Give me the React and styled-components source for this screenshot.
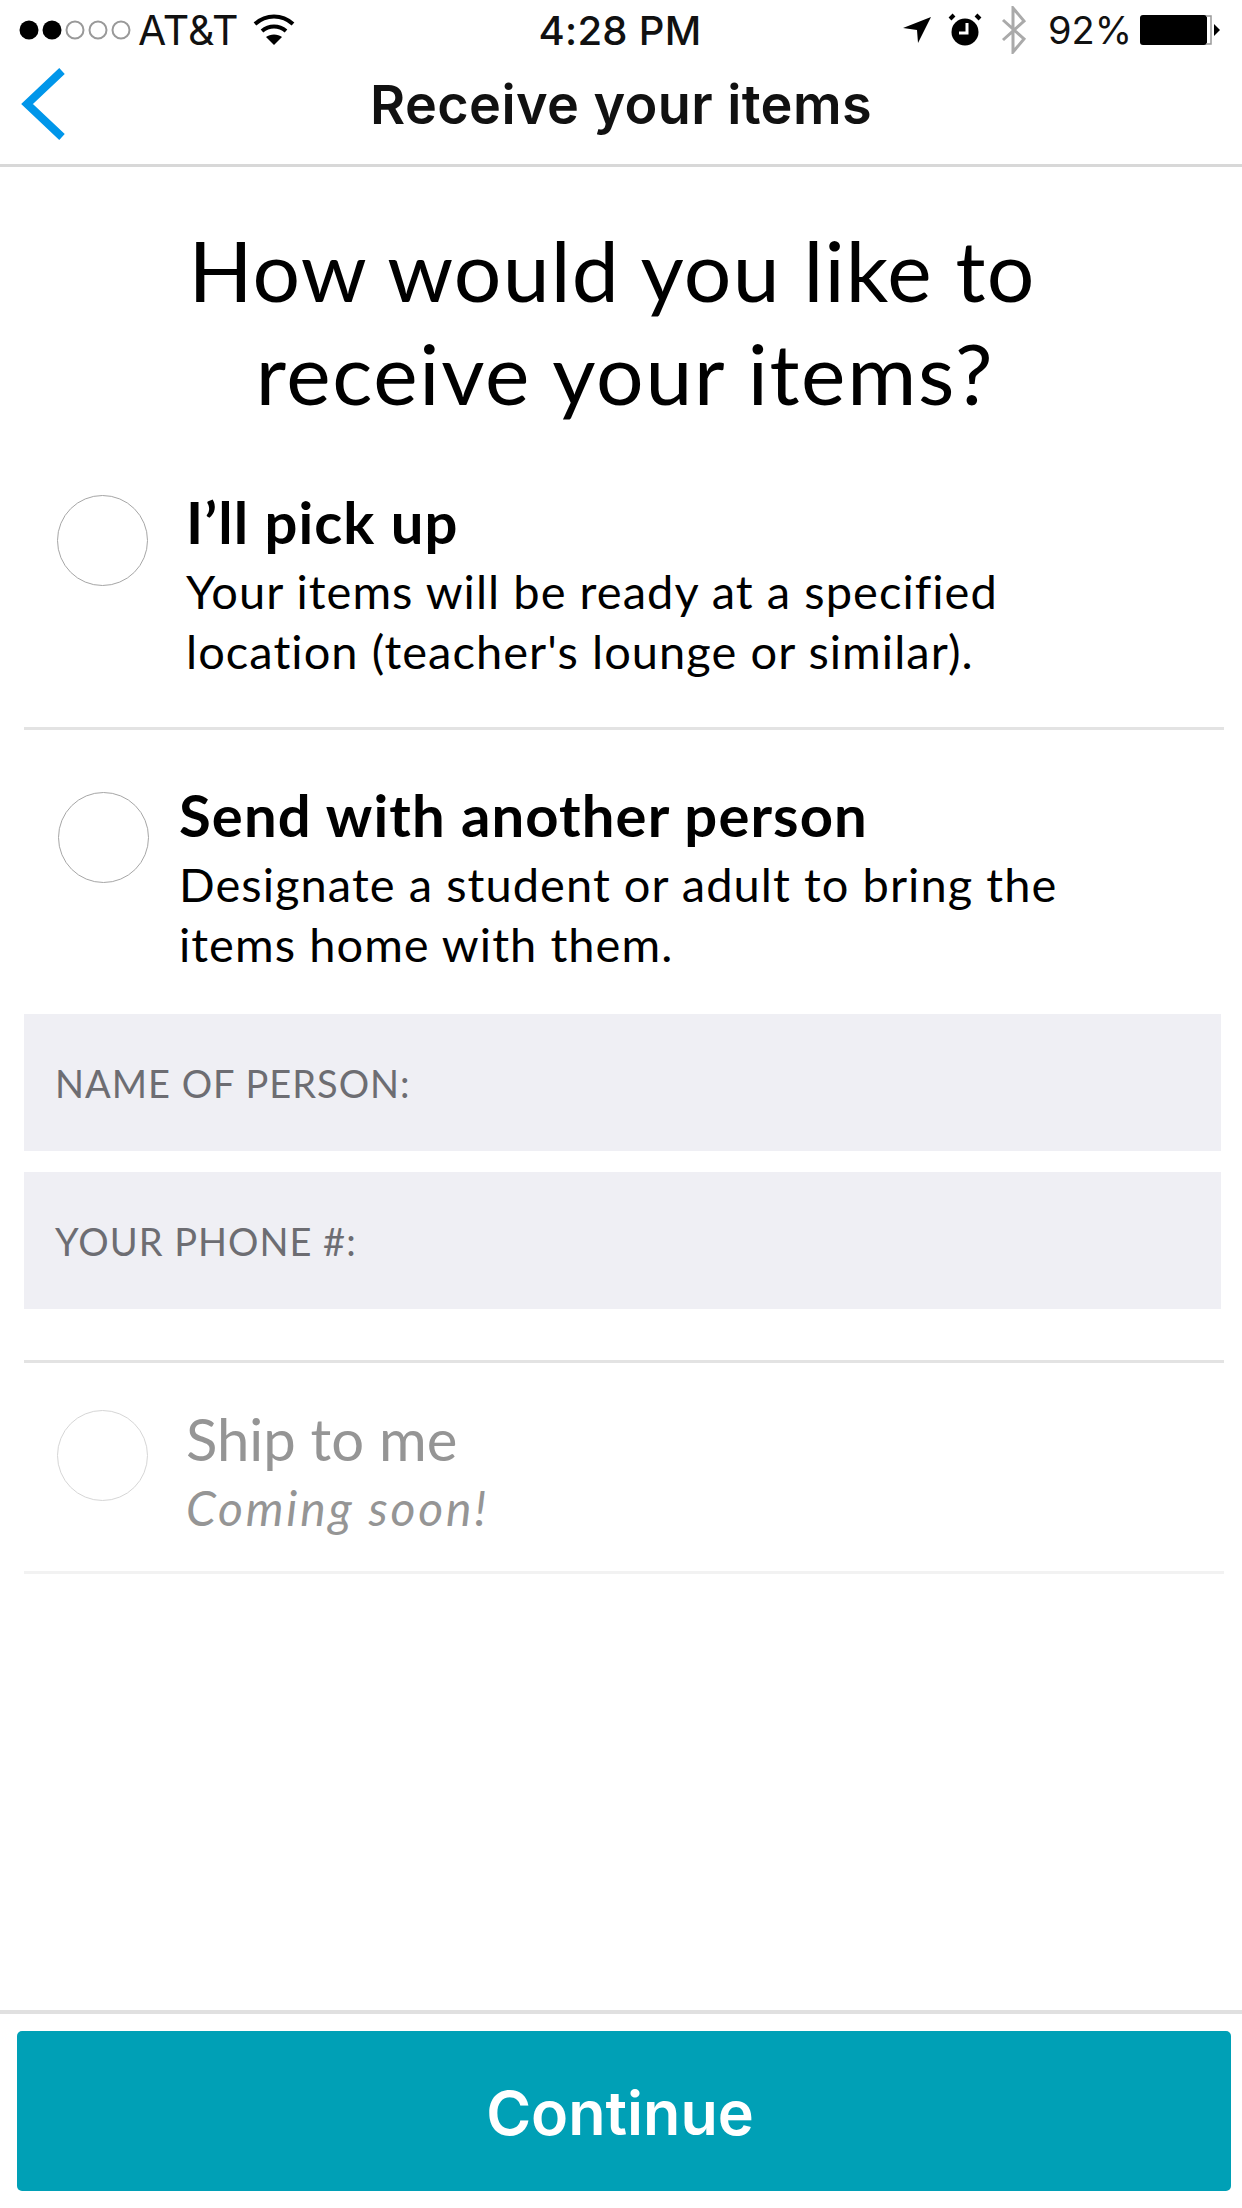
import React from "react";
import styled, { createGlobalStyle } from "styled-components";

const GlobalStyle = createGlobalStyle`
  html, body {
    margin: 0;
    padding: 0;
    background: #fff;
  }
  * {
    box-sizing: border-box;
  }
`;

const Page = styled.div`
  width: 1242px;
  height: 2208px;
  display: flex;
  flex-direction: column;
  background: #fff;
  font-family: "Lato", "Liberation Sans", sans-serif;
  color: #000;
`;

const StatusBar = styled.div`
  height: 60px;
  display: grid;
  grid-template-columns: 1fr auto 1fr;
  align-items: center;
  padding: 0 20px 0 18px;
  font-family: "Inter", "Liberation Sans", sans-serif;
  font-size: 41px;
  color: #111;
`;

const StatusLeft = styled.div`
  display: flex;
  align-items: center;
`;

const StatusRight = styled.div`
  display: flex;
  align-items: center;
  justify-content: flex-end;
`;

const Carrier = styled.span`
  margin: 0 15px 0 4px;
`;

const Clock = styled.div`
  font-size: 40px;
  font-weight: 500;
  letter-spacing: 0.3px;
`;

const Percent = styled.span`
  margin: 0 8px 0 20px;
  font-size: 38px;
`;

const NavBar = styled.div`
  height: 107px;
  display: flex;
  align-items: center;
  justify-content: center;
  position: relative;
  border-bottom: 3px solid #d8d8d8;
  padding-bottom: 16px;
`;

const BackIcon = styled.svg`
  position: absolute;
  left: 20px;
  top: 7px;
`;

const NavTitle = styled.div`
  font-family: "Inter", "Liberation Sans", sans-serif;
  font-weight: 600;
  font-size: 54px;
  letter-spacing: 0.4px;
  color: #111;
`;

const Heading = styled.h1`
  margin: 51px 0 0;
  font-size: 84px;
  line-height: 103px;
  font-weight: 400;
  text-align: center;
`;

const HeadingLine = styled.span`
  display: block;
  padding: 0 ${(p) => p.$right}px 0 ${(p) => p.$left}px;
  letter-spacing: ${(p) => p.$spacing}px;
`;

const Option = styled.div`
  margin: 0 18px 0 24px;
  padding: ${(p) => p.$top}px 0 ${(p) => p.$bottom}px ${(p) => p.$left}px;
  display: flex;
  gap: ${(p) => p.$gap}px;
  border-bottom: 3px solid ${(p) => p.$line};
`;

const Radio = styled.div`
  width: 91px;
  height: 91px;
  flex: none;
  border-radius: 50%;
  border: 1.5px solid ${(p) => (p.$muted ? "#d6d6d6" : "#a6a6a6")};
`;

const OptionText = styled.div`
  margin-top: ${(p) => p.$shift}px;
  color: ${(p) => (p.$muted ? "#959595" : "#000")};
`;

const OptionTitle = styled.div`
  font-size: 58px;
  line-height: 79px;
  font-weight: ${(p) => (p.$muted ? 400 : 700)};
  letter-spacing: ${(p) => (p.$muted ? 0 : 1.1)}px;
`;

const OptionDesc = styled.div`
  font-size: ${(p) => (p.$italic ? 48 : 47)}px;
  line-height: 60px;
  font-style: ${(p) => (p.$italic ? "italic" : "normal")};
  letter-spacing: ${(p) => (p.$italic ? 2.8 : 1.05)}px;
`;

const Field = styled.div`
  height: 137px;
  background: #efeff4;
  display: flex;
  align-items: center;
  padding-left: 31px;
  font-size: 38px;
  letter-spacing: 1px;
  color: #6d6d72;
`;

const Fields = styled.div`
  margin: 37px 21px 51px 24px;
  display: flex;
  flex-direction: column;
  gap: 21px;
`;

const Divider = styled.div`
  height: 3px;
  margin: 0 18px 0 24px;
  background: #e3e3e3;
`;

const Spacer = styled.div`
  flex: 1;
`;

const Footer = styled.div`
  border-top: 4px solid #e0e0e0;
  padding: 17px 11px 17px 17px;
`;

const ContinueButton = styled.button`
  width: 100%;
  height: 160px;
  padding: 4px 8px 0 0;
  border: 0;
  border-radius: 5px;
  background: #00a0b6;
  color: #fff;
  font-family: "Inter", "Liberation Sans", sans-serif;
  font-weight: 600;
  font-size: 61px;
`;

const AlarmWrap = styled.svg`
  margin-left: 16px;
`;

const BluetoothWrap = styled.svg`
  margin-left: 18px;
`;

const SignalDots = () => (
  <svg width="116" height="24" viewBox="0 0 116 24">
    <circle cx="11" cy="12" r="9.5" fill="#000" />
    <circle cx="34" cy="12" r="9.5" fill="#000" />
    <circle cx="57" cy="12" r="8.5" fill="none" stroke="#999" strokeWidth="2" />
    <circle cx="80" cy="12" r="8.5" fill="none" stroke="#999" strokeWidth="2" />
    <circle cx="103" cy="12" r="8.5" fill="none" stroke="#999" strokeWidth="2" />
  </svg>
);

const WifiIcon = () => (
  <svg width="42" height="32" viewBox="0 0 42 32">
    <path d="M2 10 C13 0 29 0 40 10" fill="none" stroke="#000" strokeWidth="4" />
    <path d="M9 17 C16 11 26 11 33 17" fill="none" stroke="#000" strokeWidth="4" />
    <path d="M21 31 L13 23 C17 19.500 25 19.500 29 23 Z" fill="#000" />
  </svg>
);

const LocationIcon = () => (
  <svg width="30" height="28" viewBox="0 0 30 28">
    <path d="M1 12 L29 1 L16 27 L15 14 Z" fill="#000" />
  </svg>
);

const AlarmIcon = () => (
  <AlarmWrap width="34" height="34" viewBox="0 0 34 34">
    <circle cx="17" cy="19" r="13.500" fill="#000" />
    <path d="M19 10 V20 H11" fill="none" stroke="#fff" strokeWidth="3" />
    <path d="M2 6 L6 2 M32 6 L28 2" stroke="#000" strokeWidth="4" />
  </AlarmWrap>
);

const BluetoothIcon = () => (
  <BluetoothWrap width="28" height="48" viewBox="0 0 28 48">
    <path d="M3 14 L24 33 L13 46 V2 L24 15 L3 34" fill="none" stroke="#aaa" strokeWidth="3" />
  </BluetoothWrap>
);

const BatteryIcon = () => (
  <svg width="82" height="30" viewBox="0 0 82 30">
    <rect x="0" y="0" width="67" height="30" rx="3" fill="#000" />
    <path d="M66 1 H71 V29 H66" fill="none" stroke="#999" strokeWidth="1.5" />
    <path d="M74 9 L80 15 L74 21 Z" fill="#000" />
  </svg>
);

const App = () => {
  return (
    <Page>
      <GlobalStyle />
      <StatusBar>
        <StatusLeft>
          <SignalDots />
          <Carrier>AT&amp;T</Carrier>
          <WifiIcon />
        </StatusLeft>
        <Clock>4:28 PM</Clock>
        <StatusRight>
          <LocationIcon />
          <AlarmIcon />
          <BluetoothIcon />
          <Percent>92%</Percent>
          <BatteryIcon />
        </StatusRight>
      </StatusBar>
      <NavBar>
        <BackIcon width="46" height="74" viewBox="0 0 46 74">
          <path d="M42 4 L7 37 L42 70" fill="none" stroke="#0096ea" strokeWidth="8" />
        </BackIcon>
        <NavTitle>Receive your items</NavTitle>
      </NavBar>
      <Heading>
        <HeadingLine $left={0} $right={18} $spacing={1.2}>How would you like to</HeadingLine>
        <HeadingLine $left={8} $right={0} $spacing={1.7}>receive your items?</HeadingLine>
      </Heading>
      <Option $top={71} $bottom={46} $left={33} $gap={38} $line="#e3e3e3">
        <Radio />
        <OptionText $shift={-13}>
          <OptionTitle>I’ll pick up</OptionTitle>
          <OptionDesc>Your items will be ready at a specified</OptionDesc>
          <OptionDesc>location (teacher's lounge or similar).</OptionDesc>
        </OptionText>
      </Option>
      <Option $top={62} $bottom={0} $left={34} $gap={30} $line="transparent">
        <Radio />
        <OptionText $shift={-17}>
          <OptionTitle>Send with another person</OptionTitle>
          <OptionDesc>Designate a student or adult to bring the</OptionDesc>
          <OptionDesc>items home with them.</OptionDesc>
        </OptionText>
      </Option>
      <Fields>
        <Field>NAME OF PERSON:</Field>
        <Field>YOUR PHONE #:</Field>
      </Fields>
      <Divider />
      <Option $top={47} $bottom={33} $left={33} $gap={38} $line="#f2f2f2">
        <Radio $muted />
        <OptionText $shift={-11} $muted>
          <OptionTitle $muted>Ship to me</OptionTitle>
          <OptionDesc $italic>Coming soon!</OptionDesc>
        </OptionText>
      </Option>
      <Spacer />
      <Footer>
        <ContinueButton>Continue</ContinueButton>
      </Footer>
    </Page>
  );
};

export default App;
